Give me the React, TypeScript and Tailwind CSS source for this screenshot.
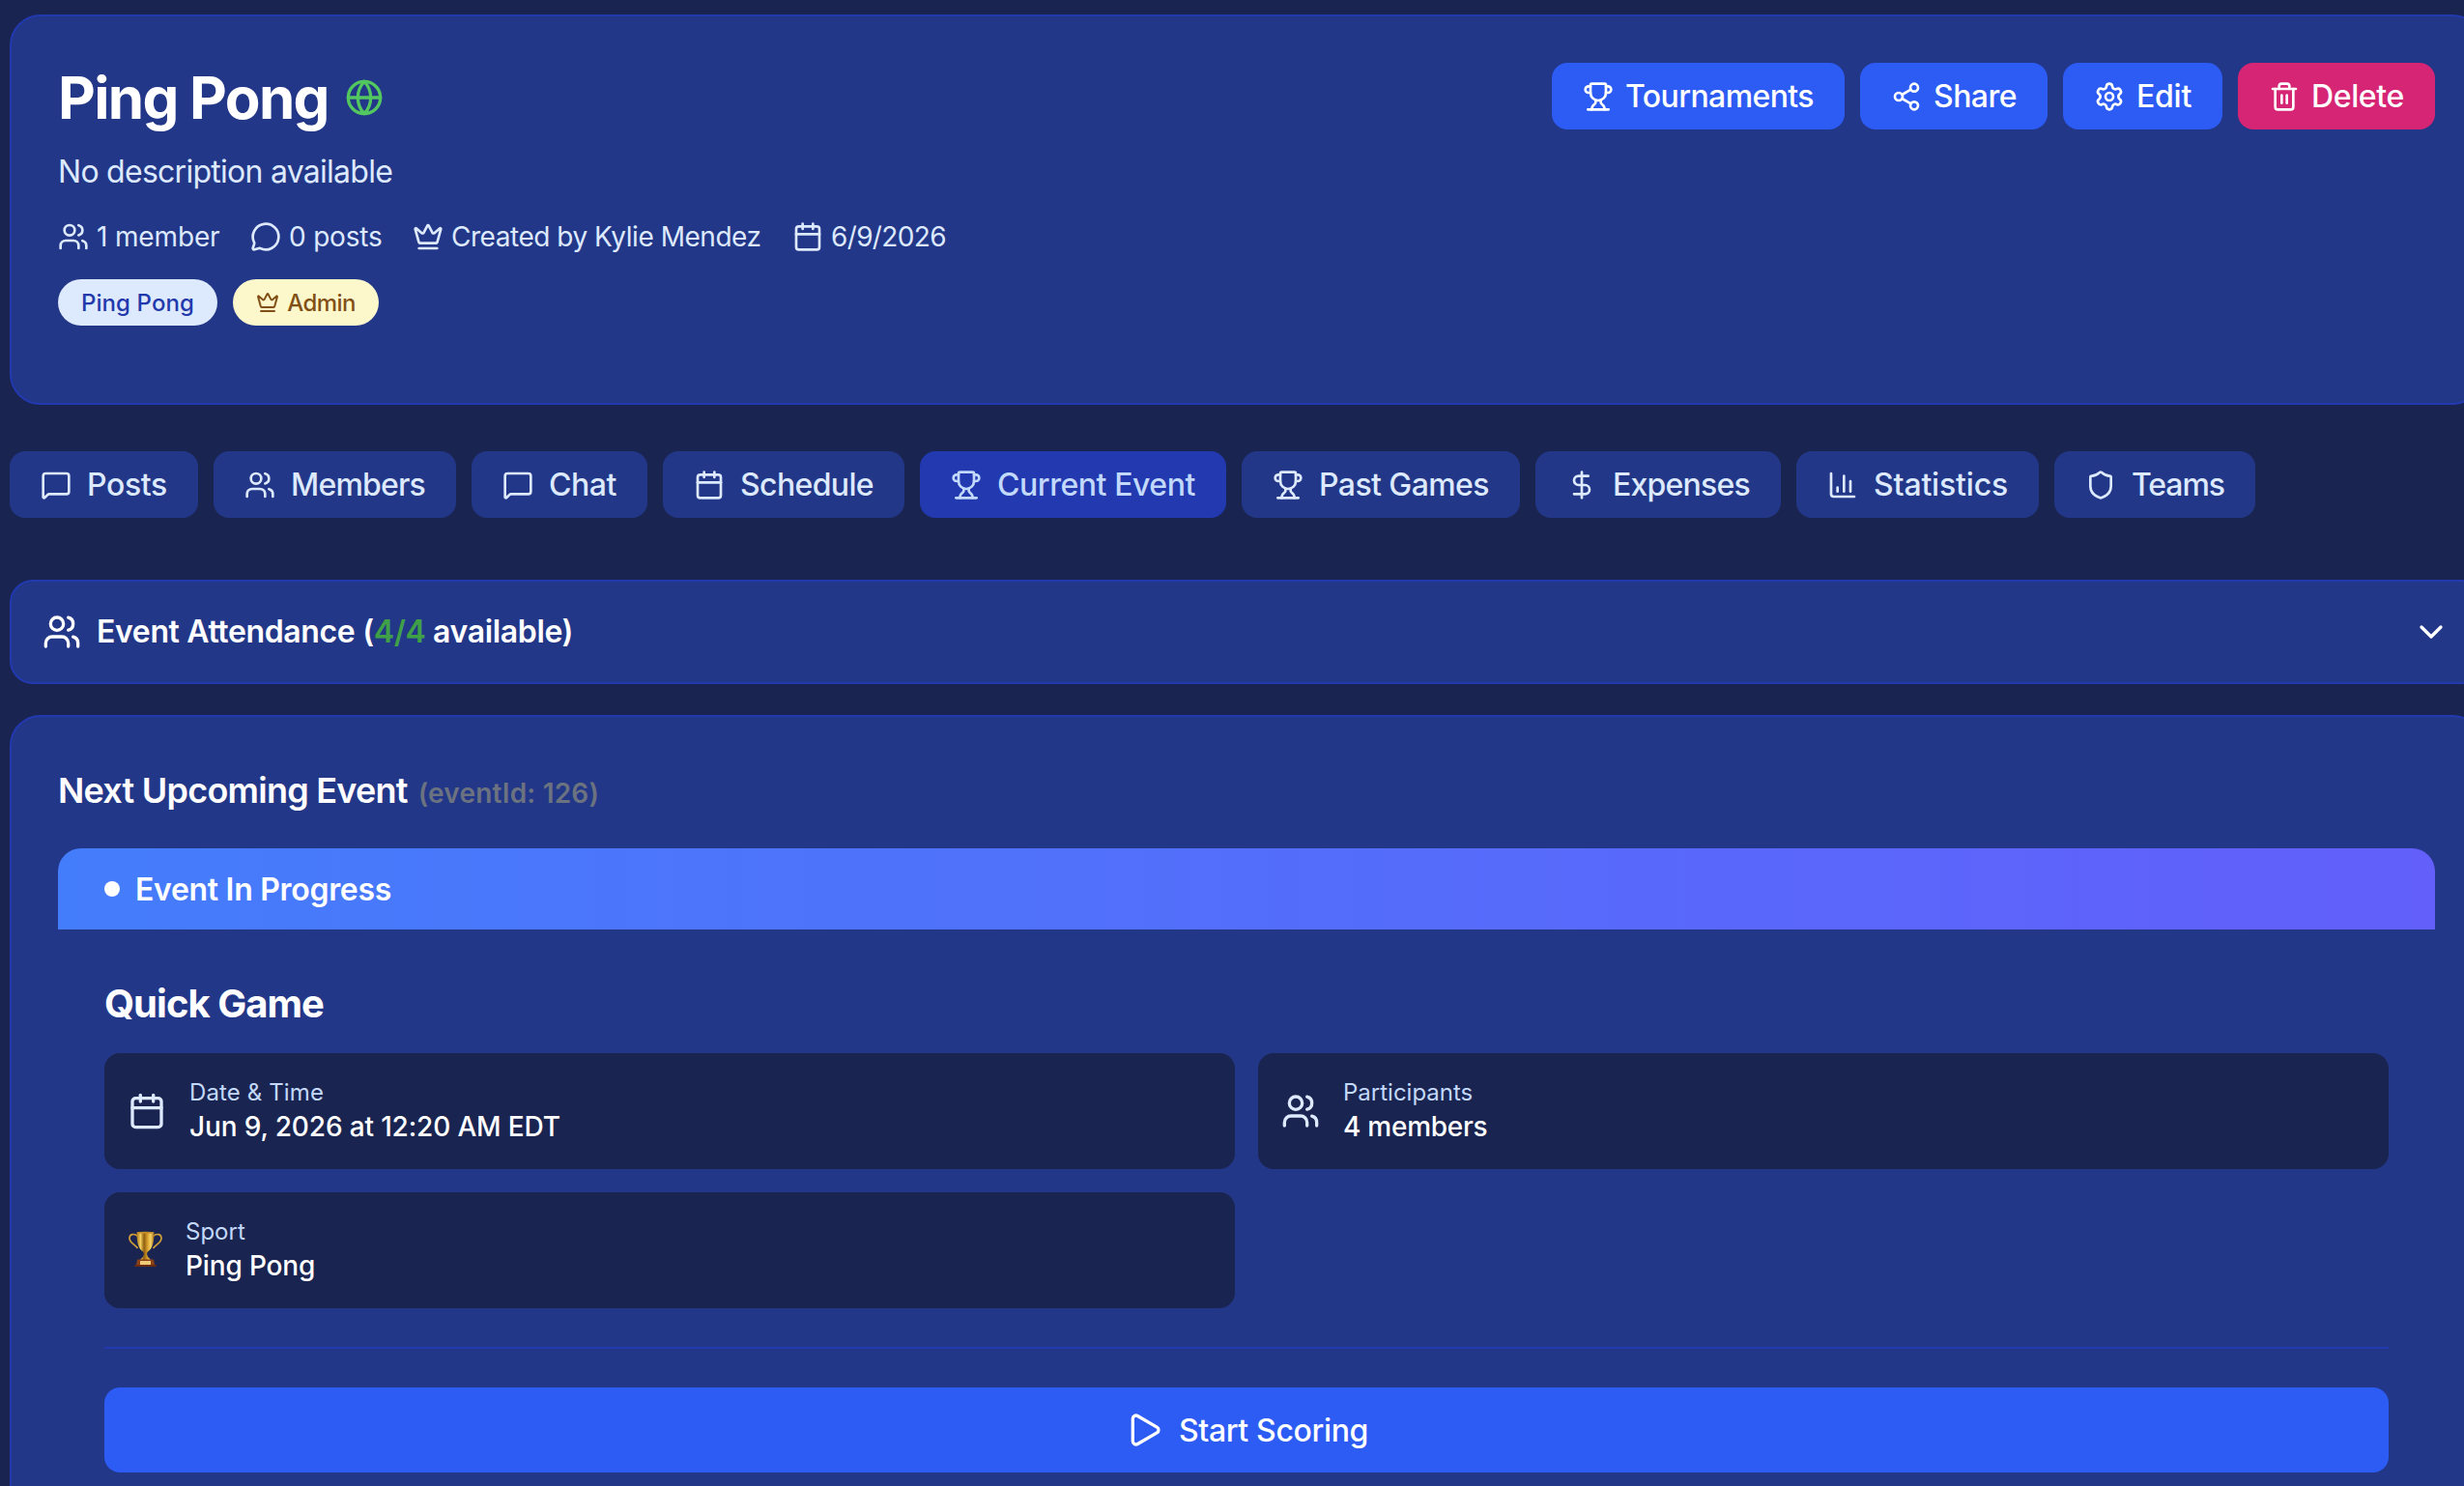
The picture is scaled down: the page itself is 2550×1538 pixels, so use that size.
import {
  Calendar,
  ChartColumn,
  ChevronDown,
  Crown,
  DollarSign,
  Globe,
  MessageCircle,
  MessageSquare,
  Play,
  Settings,
  Share2,
  Shield,
  Trash2,
  Trophy,
  Users,
} from "lucide-react"

const actions = [
  { label: "Tournaments", icon: Trophy, className: "w-[303px] bg-[#2c5cf3] tracking-[-0.59px]" },
  { label: "Share", icon: Share2, className: "w-[194px] bg-[#2c5cf3] tracking-[-0.54px]" },
  { label: "Edit", icon: Settings, className: "w-[165px] bg-[#2c5cf3] tracking-[-0.25px]" },
  { label: "Delete", icon: Trash2, className: "w-[204px] bg-[#d52574] tracking-[-0.36px]" },
]

const tabs = [
  { label: "Posts", icon: MessageSquare, className: "w-[195px] tracking-[-0.35px]" },
  { label: "Members", icon: Users, className: "w-[251px] tracking-[-0.8px]" },
  { label: "Chat", icon: MessageSquare, className: "w-[182px] tracking-[-0.43px]" },
  { label: "Schedule", icon: Calendar, className: "w-[250px] tracking-[-0.63px]" },
  { label: "Current Event", icon: Trophy, className: "w-[317px] tracking-[-0.45px]", active: true },
  { label: "Past Games", icon: Trophy, className: "w-[288px] tracking-[-0.58px]" },
  { label: "Expenses", icon: DollarSign, className: "w-[254px] tracking-[-0.78px]" },
  { label: "Statistics", icon: ChartColumn, className: "w-[251px] tracking-[-0.17px]" },
  { label: "Teams", icon: Shield, className: "w-[208px] tracking-[-1.07px]" },
]

const meta = [
  { label: "1 member", icon: Users, className: "w-[167px] tracking-[-0.15px]" },
  { label: "0 posts", icon: MessageCircle, className: "w-[136px] tracking-[-0.2px]" },
  { label: "Created by Kylie Mendez", icon: Crown, className: "w-[361px] tracking-[-0.47px]" },
  { label: "6/9/2026", icon: Calendar, className: "w-[160px] tracking-[-0.65px]" },
]

function TrophyCup() {
  return (
    <svg width="36" height="40" viewBox="0 0 36 40" className="shrink-0 mb-1">
      <defs>
        <linearGradient id="gold" x1="0" x2="1" y1="0" y2="0">
          <stop offset="0" stopColor="#a8741c" />
          <stop offset="0.22" stopColor="#f3cf5c" />
          <stop offset="0.42" stopColor="#8f5f12" />
          <stop offset="0.62" stopColor="#d89f2c" />
          <stop offset="0.8" stopColor="#f5d566" />
          <stop offset="1" stopColor="#a06a17" />
        </linearGradient>
      </defs>
      <path
        d="M10.5 7.5C7 4.2 2 5.2 2 9.5c0 4.5 5 6 8.5 10.5M26.5 7.5C30 4.200 35 5.2 35 9.5c0 4.5-5 6-8.5 10.5"
        fill="none"
        stroke="#cf9d3a"
        strokeWidth="1.7"
      />
      <path
        d="M9.5 3.5h18c0 9-1.2 16.5-6.5 20-1 1.2-1 2-.6 3.4.4 1.8 1.4 3 3.1 4.1v1h-10v-1c1.7-1.1 2.7-2.3 3.1-4.1.4-1.4.4-2.2-.6-3.4C10.7 20 9.5 12.5 9.5 3.5Z"
        fill="url(#gold)"
      />
      <ellipse cx="18.5" cy="3.7" rx="9" ry="1" fill="#c58e2b" />
      <path d="M10 31.5h17l1 5.5H9Z" fill="#8a3f16" />
      <path d="M7.5 37h22v2h-22Z" fill="#6b2b10" />
      <path d="M13 33h11v4H13Z" fill="#efcb78" />
    </svg>
  )
}

function InfoCard({ icon, label, value, labelClass = "", valueClass = "" }: any) {
  return (
    <div className="h-[120px] rounded-2xl bg-[#1a2450] px-6 flex items-center gap-6">
      {icon}
      <div className="whitespace-nowrap">
        <p className={`h-8 pt-px text-2xl/8 text-[#c3d9fb] ${labelClass}`}>{label}</p>
        <p className={`h-10 leading-10 text-[28px] font-medium text-white ${valueClass}`}>{value}</p>
      </div>
    </div>
  )
}

export default function App() {
  return (
    <div className="w-full h-[1538px] overflow-hidden bg-[#1a2450] pt-[15px] pl-[10px] font-[Inter,sans-serif] text-white">
      <div className="w-[2560px]">
        <header className="h-[404px] rounded-[32px] border-2 border-[#2239b0] bg-[#233788] p-12 flex justify-between items-start">
          <div className="text-[#dde9fd] whitespace-nowrap">
            <div className="flex items-center gap-4 h-[72px]">
              <h1 className="text-[60px] leading-[72px] font-bold text-white tracking-[-1.7px] w-[281px]">Ping Pong</h1>
              <Globe className="size-10 text-[#53c75f]" />
            </div>
            <p className="mt-[17px] h-12 leading-[48px] text-[32px] tracking-[-0.73px]">No description available</p>
            <div className="mt-[23px] h-10 flex items-center gap-8 text-[28px]">
              {meta.map(({ label, icon: Icon, className }) => (
                <div key={label} className={`flex items-center gap-2 ${className}`}>
                  <Icon className="size-8 shrink-0" />
                  <span>{label}</span>
                </div>
              ))}
            </div>
            <div className="mt-6 flex gap-4 text-2xl font-medium">
              <span className="h-12 w-[165px] rounded-full bg-[#dde9fd] text-[#2239ac] flex items-center justify-center tracking-[0.1px] pt-px">
                Ping Pong
              </span>
              <span className="h-12 w-[151px] rounded-full bg-[#fdf8cb] text-[#824f16] flex items-center justify-center gap-2 tracking-[-0.57px]">
                <Crown className="size-6" />
                <span className="pt-px">Admin</span>
              </span>
            </div>
          </div>

          <div className="flex gap-4">
            {actions.map(({ label, icon: Icon, className }) => (
              <button
                key={label}
                className={`h-[69px] rounded-2xl pl-8 flex items-center gap-3 text-[32px] font-medium whitespace-nowrap ${className}`}
              >
                <Icon className="size-8 shrink-0" />
                {label}
              </button>
            ))}
          </div>
        </header>

        <nav className="mt-12 flex gap-4">
          {tabs.map(({ label, icon: Icon, className, active }) => (
            <button
              key={label}
              className={`h-[69px] shrink-0 rounded-2xl pl-8 flex items-center gap-4 text-[32px] font-medium whitespace-nowrap ${
                active ? "bg-[#2239b0] text-[#c3d9fb]" : "bg-[#233788] text-[#dde9fd]"
              } ${className}`}
            >
              <Icon className="size-8 shrink-0" />
              {label}
            </button>
          ))}
        </nav>

        <section className="mt-16 h-[108px] rounded-3xl border-2 border-[#2239b0] bg-[#233788] px-8 flex items-center justify-between">
          <div className="flex items-center gap-4">
            <Users className="size-10" />
            <h2 className="text-[32px] font-semibold tracking-[-0.36px]">
              Event Attendance (<span className="text-[#3fa048]">4/4</span> available)
            </h2>
          </div>
          <ChevronDown className="size-10" />
        </section>

        <section className="mt-8 h-[900px] rounded-[32px] border-2 border-[#2239b0] bg-[#233788] p-12">
          <h2 className="h-14 leading-[56px] flex items-baseline gap-[11px] text-[36px] font-semibold tracking-[-0.77px]">
            Next Upcoming Event
            <span className="text-[28px] text-[#6b7280] tracking-[0.2px]">(eventId: 126)</span>
          </h2>

          <div className="mt-8 h-[84px] rounded-t-3xl bg-linear-to-r/srgb from-[#447dfb] to-[#625ffa] px-12 flex items-center gap-4">
            <span className="size-4 rounded-full bg-white" />
            <span className="pt-[2px] text-[32px] font-semibold tracking-[-0.3px]">Event In Progress</span>
          </div>

          <div className="p-12">
            <h3 className="h-14 pt-px leading-[56px] text-[40px] font-bold tracking-[-0.98px]">Quick Game</h3>
            <div className="mt-6 grid grid-cols-2 gap-6">
              <InfoCard
                icon={<Calendar className="size-10 shrink-0 text-[#dde9fd]" />}
                label="Date & Time"
                value="Jun 9, 2026 at 12:20 AM EDT"
                labelClass="tracking-[0.12px]"
                valueClass="tracking-[-0.15px]"
              />
              <InfoCard
                icon={<Users className="size-10 shrink-0 text-[#dde9fd]" />}
                label="Participants"
                value="4 members"
                valueClass="tracking-[-0.25px]"
              />
              <InfoCard icon={<TrophyCup />} label="Sport" value="Ping Pong" valueClass="tracking-[-0.15px]" />
            </div>

            <div className="mt-10 pt-10 border-t-2 border-[#2239b0]">
              <button className="w-full h-[88px] rounded-2xl bg-[#2c5cf3] flex items-center justify-center gap-4 text-[32px] font-medium tracking-[-0.35px]">
                <Play className="size-10" />
                <span className="pt-[2px]">Start Scoring</span>
              </button>
            </div>
          </div>
        </section>
      </div>
    </div>
  )
}
